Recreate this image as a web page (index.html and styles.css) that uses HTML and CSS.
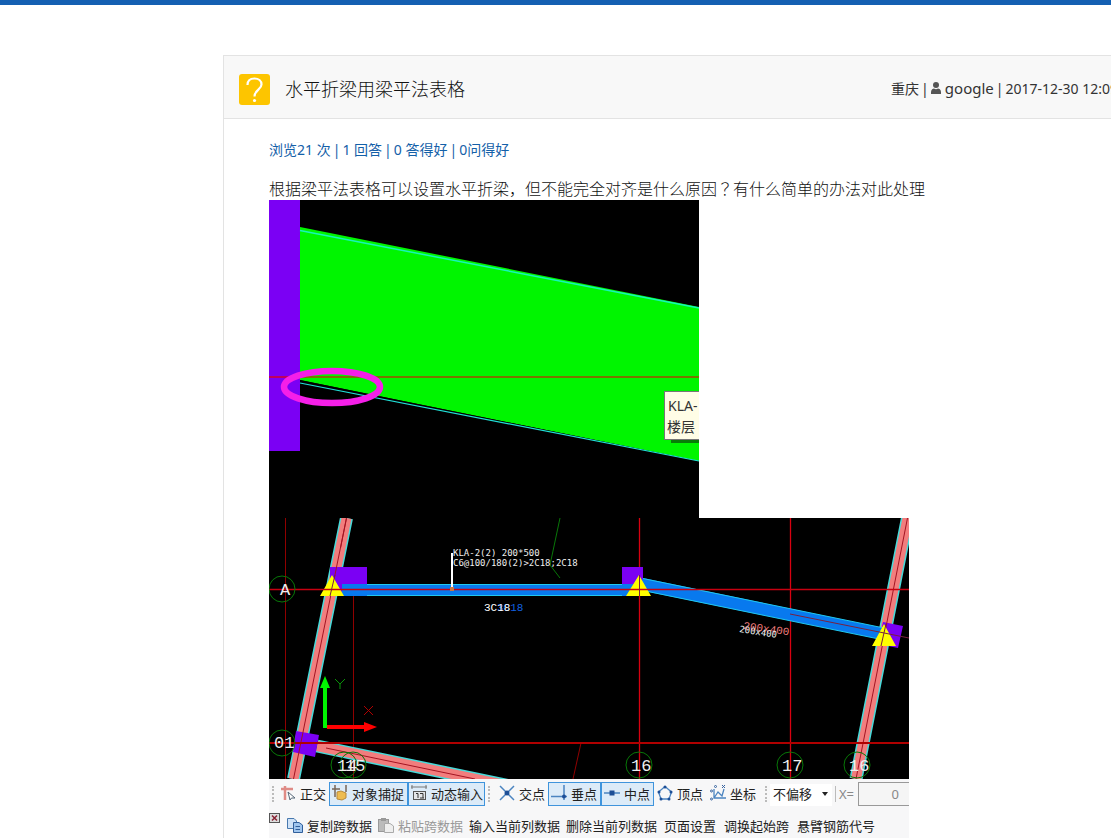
FILE: index.html
```html
<!DOCTYPE html>
<html lang="zh-CN">
<head>
<meta charset="utf-8">
<title>水平折梁用梁平法表格</title>
<link rel="stylesheet" href="styles.css">
</head>
<body>
<div class="topbar"></div>
<main class="card">
  <header class="card-head">
    <svg class="q-icon" viewBox="0 0 31 31" aria-hidden="true">
      <rect width="31" height="31" rx="3" fill="#fdc500"/>
      <path d="M8.500 11C8.500 6.500 11.500 4.500 15.500 4.500S22.500 7 22.500 10.500C22.500 15.500 15.500 16 15.500 22.500" fill="none" stroke="#fff" stroke-width="2.200"/>
      <circle cx="15.500" cy="26.500" r="1.600" fill="#fff"/>
    </svg>
    <h1 class="title">水平折梁用梁平法表格</h1>
    <div class="meta">
      <span>重庆</span><span>|</span>
      <svg class="user-icon" viewBox="0 0 10 12" aria-hidden="true"><circle cx="5" cy="3" r="3" fill="#555"/><path d="M0 12V10C0 7.500 2 6.500 3 6.500Q5 8 7 6.500C8 6.500 10 7.500 10 10V12Z" fill="#555"/></svg>
      <span class="user">google</span>
      <span>|</span><span>2017-12-30 12:09</span>
    </div>
  </header>
  <div class="card-body">
    <p class="stats"><span>浏览21 次</span><span>|</span><span>1 回答</span><span>|</span><span>0 答得好</span><span>|</span><span>0问得好</span></p>
    <p class="question">根据梁平法表格可以设置水平折梁，但不能完全对齐是什么原因<span class="mark" lang="zh-TW">？</span>有什么简单的办法对此处理</p>
    <svg class="detail" viewBox="0 0 430 318" role="img" aria-label="KLA 楼层">
      <rect width="430" height="318" fill="#000"/>
      <rect width="31" height="251" fill="#7b00f4"/>
      <path d="M31 27L430 107V261L31 180Z" fill="#00f500"/>
      <path d="M31 30.500L430 108" stroke="#16f5ba" stroke-width="1.500"/>
      <path d="M31 180L430 261L31 184Z" fill="#000"/>
      <path d="M31 183L430 261" stroke="#20e0d8" stroke-width="1.200"/>
      <path d="M0 177H31" stroke="#c0005c" stroke-width="2"/>
      <path d="M31 177H430" stroke="#7a7400" stroke-width="2"/>
      <ellipse cx="63" cy="187" rx="48" ry="16" fill="none" stroke="#f51fe8" stroke-width="6.500"/>
      <rect x="402" y="238" width="28" height="5" fill="#087c08"/>
      <rect x="395.500" y="191.500" width="40" height="48" fill="#fffde6" stroke="#777"/>
      <text x="399" y="211" class="tip">KLA-</text>
      <text x="398" y="232" class="tip">楼层</text>
    </svg>
    <section class="shot">
      <svg class="plan" viewBox="0 0 640 261" role="img" aria-label="KLA-2(2) 200*500">
        <rect width="640" height="261" fill="#000"/>
        <g stroke="#900000" fill="none">
          <path d="M16.500 0V261M84.500 72V261M312 225L304 261"/>
          <path d="M370.500 0V261M521.500 0V261" stroke="#d80010" stroke-width="1.300"/>
        </g>
        <g stroke="#47dada" stroke-width="13">
          <path d="M77.500 0L24.500 261M638.500 0L587 261M48 228L258 271.500"/>
        </g>
        <g stroke="#f27d7d" stroke-width="10">
          <path d="M77.500 0L24.500 261M638.500 0L587 261M48 228L258 271.500"/>
        </g>
        <path d="M61 49H98V78H61ZM353 49H374V72H353ZM614 104L634 108L629 130L609 126ZM27 213L50 217L46 239L24 234Z" fill="#7b00f4"/>
        <path d="M71.500 30L77.500 0L24.500 261M638.500 0L587 261" fill="none" stroke="#a31422"/>
        <path d="M57 230L206 261" stroke="#a31422"/>
        <path d="M73 66H370V78H73Z" fill="#0879ee"/>
        <path d="M98 66.500H353M98 77.500H353" stroke="#20c8ee"/>
        <path d="M374 60L615 110L610 121L370 72Z" fill="#0879ee"/>
        <path d="M374 60.500L615 110M374 72.500L610 121" stroke="#20c8ee"/>
        <path d="M51 78L63 57L75 78ZM357 78L370 57L382 78ZM603 128L615 106L627 128Z" fill="#ff0"/>
        <path d="M0 71.500H640" stroke="#c80010" stroke-width="1.300"/>
        <path d="M0 225H640" stroke="#b00000" stroke-width="1.800"/>
        <path d="M521 96L640 120M66 57L61 78M370.500 57V78M617 106L612 128" fill="none" stroke="#782040"/>
        <g fill="none" stroke="#087708">
          <path d="M291 0L281 47L291 60"/>
          <circle cx="13" cy="71" r="13"/><circle cx="13" cy="225" r="13"/>
          <circle cx="75" cy="247" r="13"/><circle cx="84" cy="247" r="13"/>
          <circle cx="370" cy="247" r="13"/><circle cx="521" cy="247" r="13"/><circle cx="588" cy="247" r="13"/>
        </g>
        <path d="M183 35V70" stroke="#fff" stroke-width="2"/>
        <rect x="181" y="69" width="4" height="4" fill="#c77844"/>
        <g class="cad">
          <text x="184" y="38">KLA-2(2) 200*500</text>
          <text x="184" y="48">C6@100/180(2)&gt;2C18;2C18</text>
        </g>
        <g class="cad-mid">
          <text x="228" y="93" fill="#1260e0">3C18</text>
          <text x="215" y="93" fill="#fff">3C18</text>
          <text x="474" y="111" fill="#f27d7d" transform="rotate(8 474 111)">200x400</text>
        </g>
        <text x="470" y="114" class="cad" transform="rotate(9 470 114)">200x400</text>
        <g class="axis">
          <text x="11" y="77">A</text><text x="5" y="230">01</text>
          <text x="68" y="253">14</text><text x="76" y="253">15</text>
          <text x="362" y="253">16</text><text x="513" y="253">17</text><text x="580" y="253">16</text>
        </g>
        <path d="M56 210V168" stroke="#00f500" stroke-width="4"/><path d="M51 170L56 158L61 170Z" fill="#00f500"/>
        <path d="M58 209H98" stroke="#f00" stroke-width="4"/><path d="M95 204L108 209L95 214Z" fill="#f00"/>
        <path d="M66 161L71 166L76 161M71 166V171" fill="none" stroke="#089408"/>
        <path d="M95 188L104 197M104 188L95 197" stroke="#b00000"/>
      </svg>
      <div class="tools">
        <div class="row snap">
          <i class="grip"></i>
          <button type="button"><svg viewBox="0 0 16 16"><path d="M1 4H13M5 1V15" stroke="#df8b86" stroke-width="2.500" fill="none"/><path d="M8 7L15 13L11.500 13L10 15Z" fill="#fff" stroke="#567"/></svg>正交</button>
          <button type="button" class="on"><svg viewBox="0 0 16 16"><path d="M0 4H8M3 0V12M14 0V7" stroke="#765" stroke-width="1.500" fill="none"/><path d="M5 7L9 6L14 8V13L10 15L5 14Z" fill="#eebc50" stroke="#b98a3a"/></svg>对象捕捉</button>
          <button type="button" class="on"><svg viewBox="0 0 16 16"><path d="M0 2H16M1 0V4M15 0V4" stroke="#777" fill="none"/><rect x="2.500" y="6.500" width="12" height="8" fill="#e3e6e9" stroke="#555"/><path d="M5 8.500H7V13M9 8.500H12V13M9 13H13" stroke="#333" fill="none"/></svg>动态输入</button>
          <i class="grip"></i>
          <button type="button"><svg viewBox="0 0 16 16"><path d="M1 1L15 15M15 1L1 15" stroke="#4b84c0" stroke-width="1.500"/><circle cx="8" cy="8" r="2.500" fill="#1d4e96"/></svg>交点</button>
          <button type="button" class="on"><svg viewBox="0 0 16 16"><path d="M0 11.500H16M13 0V15" stroke="#4b84c0" stroke-width="1.500"/><circle cx="13" cy="11.500" r="2" fill="#1d4e96"/></svg>垂点</button>
          <button type="button" class="on"><svg viewBox="0 0 16 16"><path d="M0 8H16" stroke="#4b84c0" stroke-width="1.500"/><rect x="5.500" y="5.500" width="5" height="5" fill="#1d4e96"/></svg>中点</button>
          <button type="button" class="vertex"><svg viewBox="0 0 16 16"><path d="M8 1.500L14.500 7L12 14H4L1.500 7Z" fill="none" stroke="#4b84c0" stroke-width="1.300"/><g fill="#1d4e96"><circle cx="8" cy="2" r="1.500"/><circle cx="14" cy="7" r="1.500"/><circle cx="12" cy="14" r="1.500"/><circle cx="4" cy="14" r="1.500"/><circle cx="2" cy="7" r="1.500"/></g></svg>顶点</button>
          <button type="button" class="vertex"><svg viewBox="0 0 16 16"><path d="M4 4V13H16M4 13L8 7L12 11L14 4" fill="none" stroke="#4b84c0" stroke-width="1.300"/><g fill="none" stroke="#35629f"><circle cx="1.500" cy="14" r="1"/><circle cx="1.500" cy="6" r="1"/><circle cx="5.500" cy="1.500" r="1"/><path d="M12 0L15 3M15 0L12 3"/></g></svg>坐标</button>
          <i class="grip"></i>
          <span class="pick"><select aria-label="偏移"><option>不偏移</option></select></span>
          <label class="xlabel" for="x">X=</label>
          <input id="x" class="xval" type="text" value="0">
        </div>
        <div class="row cmds">
          <svg class="close" viewBox="0 0 11 12" aria-hidden="true"><rect x=".5" y=".5" width="10" height="9" fill="#ddd" stroke="#555"/><path d="M3 2.500L8 7.500M8 2.500L3 7.500" stroke="#823" stroke-width="1.500"/></svg>
          <button type="button"><svg viewBox="0 0 16 16"><path d="M.5 1.500H7L9.500 4V11.500H.5Z" fill="#cfe2f7" stroke="#4778ae"/><path d="M6.500 5.500H12L15.500 8V15.500H6.500Z" fill="#9fc5ee" stroke="#315f9a"/><path d="M8.500 9.500H13M8.500 12.500H13" stroke="#315f9a"/></svg>复制跨数据</button>
          <button type="button" class="off"><svg viewBox="0 0 16 16"><rect x=".5" y="2.500" width="10" height="12" fill="#bbb" stroke="#999"/><path d="M3 1H8V4H3Z" fill="#999"/><path d="M6.500 6.500H12L15.500 9V15.500H6.500Z" fill="#eee" stroke="#aaa"/></svg>粘贴跨数据</button>
          <button type="button">输入当前列数据</button>
          <button type="button">删除当前列数据</button>
          <button type="button">页面设置</button>
          <button type="button">调换起始跨</button>
          <button type="button">悬臂钢筋代号</button>
        </div>
      </div>
    </section>
  </div>
</main>
</body>
</html>
```
FILE: styles.css
```css
* { box-sizing: border-box; }
html { overflow: hidden; }
body {
  margin: 0;
  background: #fff;
  color: #333;
  font-family: "Noto Sans", "Noto Sans CJK SC", sans-serif;
}
.topbar { height: 5px; background: #1460b2; }
.card {
  width: 920px;
  margin: 50px 0 0 223px;
  border: 1px solid #e3e3e3;
}
.card-head {
  display: flex;
  align-items: center;
  height: 63px;
  padding: 4px 24px 0 15px;
  background: #f8f8f8;
  border-bottom: 1px solid #e3e3e3;
}
.q-icon { width: 31px; height: 31px; margin-right: 15px; }
.title {
  flex: 1;
  margin: 0;
  color: #111;
  font-family: "Noto Sans CJK SC", sans-serif;
  font-size: 18px;
  font-weight: 300;
  line-height: 26px;
  padding-bottom: 2px;
}
.meta {
  display: flex;
  align-items: center;
  gap: 2px;
  padding-bottom: 2px;
  font-size: 14px;
  white-space: nowrap;
}
.user-icon { width: 10px; height: 12px; margin-right: 2px; }
.user { font-size: 15px; }
.card-body { padding: 20px 45px; }
.stats {
  display: flex;
  gap: 2px;
  margin: 0;
  color: #1460a8;
  font-size: 14px;
  line-height: 22px;
}
.question {
  margin: 16px 0 0;
  color: #111;
  font-family: "Noto Sans CJK SC", sans-serif;
  font-size: 16px;
  font-weight: 300;
  line-height: 23px;
}
.mark { font-family: "Noto Sans CJK TC", sans-serif; }
.detail { display: block; width: 430px; }
.tip { font: 14px "Noto Sans", "Noto Sans CJK SC", sans-serif; fill: #333; }
.shot { width: 640px; overflow: hidden; }
.plan { display: block; width: 100%; }
.cad { font: 9px "DejaVu Sans Mono", monospace; fill: #eee; }
.cad-mid { font: 11px "Liberation Mono", monospace; }
.axis { font: 17px "Liberation Mono", monospace; fill: #eee; }
.tools { padding-top: 2px; background: #f7f7f8; }
.row { display: grid; align-items: center; }
.snap {
  height: 26px;
  grid-template-columns: 10px 50px 79px 77px 13px 50px 53px 53px 53px 55px 8px 65px 23px 60px;
}
.cmds {
  height: 38px;
  grid-template-columns: 17px 91px 91px 97px 98px 60px 73px 84px;
}
.tools button {
  display: flex;
  align-items: center;
  gap: 4px;
  height: 24px;
  padding: 0 0 2px;
  border: 1px solid transparent;
  background: none;
  color: #222;
  font: 13px "Noto Sans CJK SC", sans-serif;
  white-space: nowrap;
}
.tools button svg { flex: none; width: 16px; height: 16px; }
.tools .on { padding-left: 2px; border-color: #3f94dc; background: #dcebf8; }
.tools .vertex { padding-left: 2px; }
.tools .off { color: #999; }
.grip {
  width: 0;
  height: 16px;
  margin-left: 3px;
  border-left: 2px dotted #bbb;
}
.pick { position: relative; }
.pick::after {
  content: "";
  position: absolute;
  right: 7px;
  top: 10px;
  border: 3px solid transparent;
  border-top: 4px solid #222;
}
.pick select {
  width: 62px;
  height: 22px;
  padding: 0 3px 2px;
  border: 0;
  appearance: none;
  background: #fff;
  color: #222;
  font: 13px "Noto Sans CJK SC", sans-serif;
}
.xlabel { padding-left: 3px; border-left: 1px solid #bbb; color: #888; font-size: 13px; line-height: 16px; }
.xval {
  width: 60px;
  height: 24px;
  padding: 0 18px 0 0;
  border: 1px solid #999;
  background: #f5f5f5;
  color: #888;
  font: 13px "Noto Sans", sans-serif;
  text-align: right;
}
.close { width: 11px; height: 12px; margin-bottom: 14px; }
```
